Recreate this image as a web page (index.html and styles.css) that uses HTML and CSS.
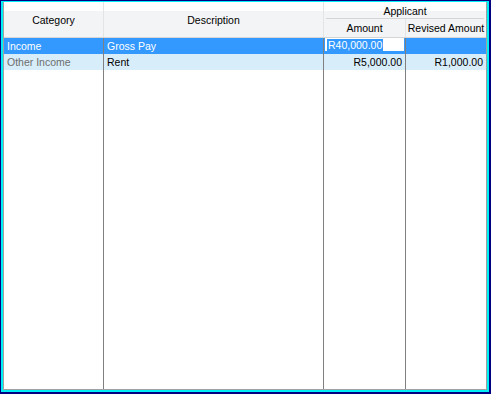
FILE: index.html
```html
<!DOCTYPE html>
<html>
<head>
<meta charset="utf-8">
<link rel="stylesheet" href="styles.css">
</head>
<body>
<div class="frame">
  <div class="frame-inner">
    <div class="grid">
      <div class="header">
        <div class="hcell h-category">Category</div>
        <div class="hcell h-description">Description</div>
        <div class="hcell h-band"><span class="band-label">Applicant</span></div>
        <div class="hcell h-amount">Amount</div>
        <div class="hcell h-revised">Revised Amount</div>
      </div>
      <div class="body">
        <div class="cell sel">Income</div>
        <div class="cell sel">Gross Pay</div>
        <div class="cell sel col-amt"><div class="editor"><span class="hl">R40,000.00</span></div></div>
        <div class="cell sel last"></div>

        <div class="cell alt readonly">Other Income</div>
        <div class="cell alt">Rent</div>
        <div class="cell alt num">R5,000.00</div>
        <div class="cell alt num last">R1,000.00</div>

        <div class="cell"></div>
        <div class="cell"></div>
        <div class="cell"></div>
        <div class="cell last"></div>
      </div>
    </div>
  </div>
</div>
</body>
</html>
```

FILE: styles.css
```css
html, body {
  margin: 0;
  padding: 0;
  background: #ffffff;
}

body {
  font-family: "Liberation Sans", Arial, sans-serif;
  font-size: 10.5px;
  color: #000;
}

.frame {
  box-sizing: border-box;
  width: 491px;
  height: 394px;
  border-style: solid;
  border-color: #000080;
  border-width: 1px 2px 2px 1px;
}

.frame-inner {
  box-sizing: border-box;
  height: 100%;
  border-style: solid;
  border-color: #00eef6;
  border-width: 1px 2px 2px 2px;
}

.grid {
  box-sizing: border-box;
  height: 100%;
  display: flex;
  flex-direction: column;
  border-left: 1px solid #a0a0a0;
  border-right: 1px solid #a0a0a0;
  border-bottom: 1px solid #a0a0a0;
  background: #fff;
}

.header {
  display: grid;
  grid-template-columns: 100px 220px 82px 80px;
  grid-template-rows: 17px 18px;
  background: linear-gradient(#ffffff 0, #ffffff 9px, #f3f4f6 9px, #f3f4f6 100%);
  border-bottom: 1px solid #d5d5d5;
}

.hcell {
  display: flex;
  align-items: center;
  justify-content: center;
  border-right: 1px solid #e3e4e6;
  white-space: nowrap;
  color: #000;
}

.h-category { grid-column: 1; grid-row: 1 / 3; }
.h-description { grid-column: 2; grid-row: 1 / 3; }
.h-band {
  grid-column: 3 / 5;
  grid-row: 1;
  border-right: none;
  align-items: stretch;
  padding: 0 2px;
}
.band-label {
  flex: 1;
  display: flex;
  align-items: center;
  justify-content: center;
  border-bottom: 1px solid #d5d5d5;
  padding-top: 1px;
}
.h-amount { grid-column: 3; grid-row: 2; }
.h-revised { grid-column: 4; grid-row: 2; border-right: none; }

.body {
  flex: 1;
  display: grid;
  grid-template-columns: 100px 220px 82px 80px;
  grid-template-rows: 16px 16px 1fr;
}

.cell {
  box-sizing: border-box;
  border-right: 1px solid #808080;
  padding: 0 3px;
  display: flex;
  align-items: center;
  white-space: nowrap;
  overflow: hidden;
}
.cell.last { border-right: none; }

.sel {
  background: #3399ff;
  color: #ffffff;
}
.alt {
  background: #d8edfa;
}
.readonly { color: #6d6d6d; }
.num { justify-content: flex-end; padding-right: 3px; }

.col-amt {
  padding: 0 1px;
  align-items: flex-start;
}
.editor {
  width: 100%;
  height: 13px;
  background: #fff;
  padding: 1px 0 0 2px;
  box-sizing: border-box;
  display: flex;
  align-items: center;
}
.hl {
  background: #3399ff;
  color: #fff;
  line-height: 12px;
  padding: 0 1px;
}
```
